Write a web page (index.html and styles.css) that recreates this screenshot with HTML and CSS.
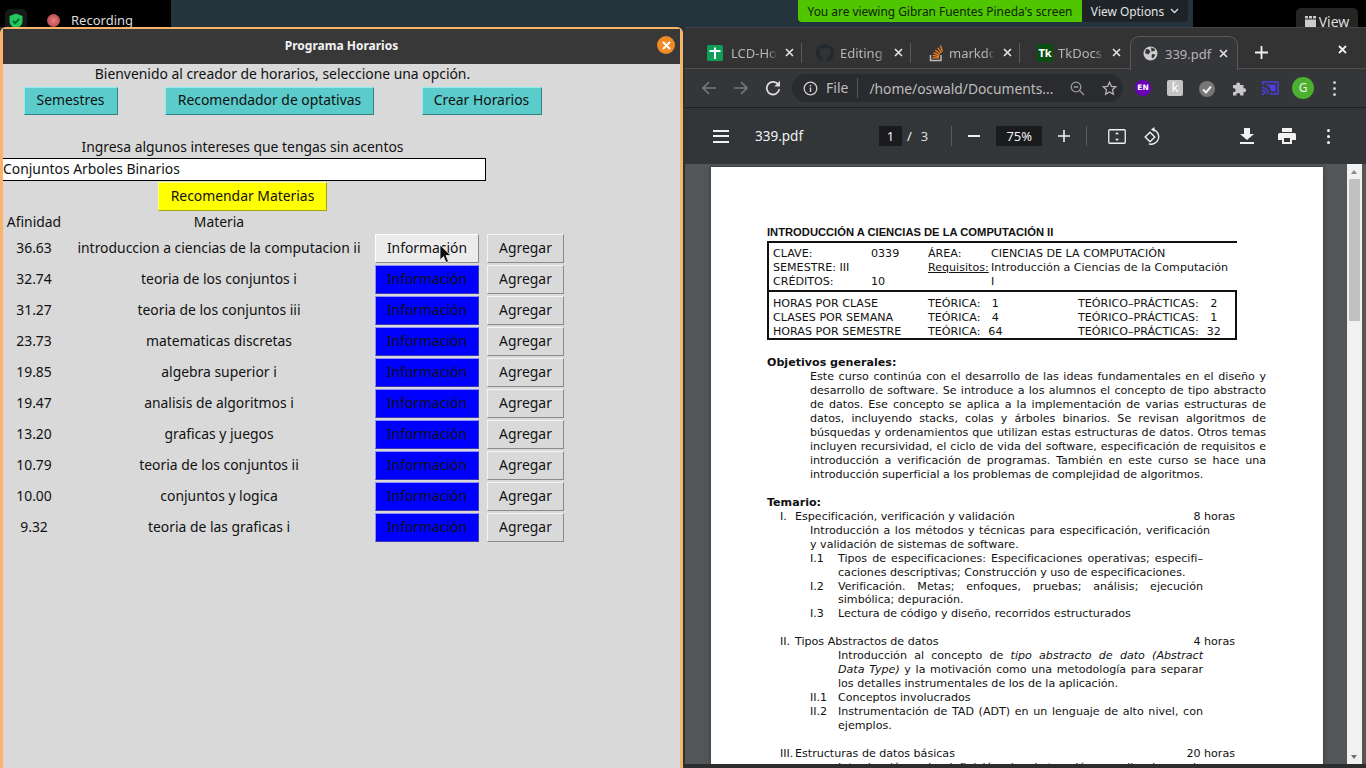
FILE: index.html
```html
<!DOCTYPE html>
<html lang="es">
<head>
<meta charset="utf-8">
<title>Programa Horarios</title>
<link rel="stylesheet" href="styles.css">
</head>
<body>
<div class="desktop">
  <div class="rec-strip">
    <span class="shield-bg"></span>
    <svg class="shield" width="14" height="16" viewBox="0 0 14 16"><path d="M7 0.5 13.500 3v5c0 3.600-2.800 6.400-6.500 7.500C3.300 14.400.5 11.600.5 8V3z" fill="#22c55e"/><path d="M4 8l2.200 2.200L10.200 5.800" fill="none" stroke="#063" stroke-width="1.800"/></svg>
    <span class="rec-dot"></span>
    <span class="rec-label">Recording</span>
  </div>
  <div class="share-bar">
    <span class="share-msg">You are viewing Gibran Fuentes Pineda's screen</span>
    <span class="share-opt">View Options <svg width="9" height="6" viewBox="0 0 9 6"><path d="M1 1l3.500 3.500L8 1" fill="none" stroke="#ddd" stroke-width="1.300"/></svg></span>
  </div>
  <div class="right-black"></div>
  <div class="view-btn">
    <svg width="11" height="11" viewBox="0 0 11 11"><path d="M0 0h3v2.500H0zM4 0h3v2.500H4zM8 0h3v2.500H8z" fill="#ccc"/><path d="M0 3.500h11V11H0z" fill="#ccc"/></svg>
    <span>View</span>
  </div>

  <section class="tk-window">
    <header class="tk-title">
      <span>Programa Horarios</span>
      <span class="tk-close"><svg width="9" height="9" viewBox="0 0 9 9"><path d="M1.500 1.500l6 6M7.500 1.500l-6 6" stroke="#fff" stroke-width="2" stroke-linecap="round"/></svg></span>
    </header>
    <div class="tk-body">
      <p class="welcome">Bienvenido al creador de horarios, seleccione una opción.</p>
      <div class="menu-row">
        <button class="tk-btn teal w-sem">Semestres</button>
        <button class="tk-btn teal w-rec">Recomendador de optativas</button>
        <button class="tk-btn teal w-cre">Crear Horarios</button>
      </div>
      <div class="search">
        <p class="prompt">Ingresa algunos intereses que tengas sin acentos</p>
        <div class="entry">Conjuntos Arboles Binarios</div>
        <button class="tk-btn yellow">Recomendar Materias</button>
      </div>
      <div class="results">
        <span class="head">Afinidad</span><span class="head">Materia</span><span></span><span></span>
        <span>36.63</span><span>introduccion a ciencias de la computacion ii</span><button class="tk-btn gray hover">Información</button><button class="tk-btn gray">Agregar</button>
        <span>32.74</span><span>teoria de los conjuntos i</span><button class="tk-btn blue">Información</button><button class="tk-btn gray">Agregar</button>
        <span>31.27</span><span>teoria de los conjuntos iii</span><button class="tk-btn blue">Información</button><button class="tk-btn gray">Agregar</button>
        <span>23.73</span><span>matematicas discretas</span><button class="tk-btn blue">Información</button><button class="tk-btn gray">Agregar</button>
        <span>19.85</span><span>algebra superior i</span><button class="tk-btn blue">Información</button><button class="tk-btn gray">Agregar</button>
        <span>19.47</span><span>analisis de algoritmos i</span><button class="tk-btn blue">Información</button><button class="tk-btn gray">Agregar</button>
        <span>13.20</span><span>graficas y juegos</span><button class="tk-btn blue">Información</button><button class="tk-btn gray">Agregar</button>
        <span>10.79</span><span>teoria de los conjuntos ii</span><button class="tk-btn blue">Información</button><button class="tk-btn gray">Agregar</button>
        <span>10.00</span><span>conjuntos y logica</span><button class="tk-btn blue">Información</button><button class="tk-btn gray">Agregar</button>
        <span>9.32</span><span>teoria de las graficas i</span><button class="tk-btn blue">Información</button><button class="tk-btn gray">Agregar</button>
      </div>
    </div>
  </section>
  <svg class="cursor" width="14" height="20" viewBox="0 0 14 20"><path d="M1 1v15l3.500-3.500 2.500 6 2.500-1-2.500-6h5z" fill="#111" stroke="#eee" stroke-width=".8"/></svg>

  <section class="chrome">
    <div class="tabstrip">
      <div class="tab">
        <svg class="fav" width="16" height="16" viewBox="0 0 16 16"><rect width="16" height="16" rx="1.500" fill="#0f9d58"/><path d="M2.500 6h11M8 2.500V14" stroke="#fff" stroke-width="2"/></svg>
        <span class="tab-name">LCD-Hor</span><span class="tab-x"><svg width="9" height="9" viewBox="0 0 9 9"><path d="M1 1l7 7M8 1l-7 7" stroke="#e4e4e4" stroke-width="1.600"/></svg></span>
      </div>
      <div class="tab">
        <svg class="fav" width="18" height="18" viewBox="0 0 16 16"><path fill="#24292e" d="M8 0C3.580 0 0 3.580 0 8c0 3.540 2.290 6.530 5.470 7.590.4.070.55-.17.55-.38 0-.19-.01-.82-.01-1.490-2.010.37-2.530-.49-2.690-.94-.09-.23-.48-.94-.82-1.130-.28-.15-.68-.52-.01-.53.63-.01 1.080.58 1.230.82.720 1.210 1.870.87 2.330.66.070-.52.280-.87.510-1.070-1.780-.2-3.640-.89-3.640-3.950 0-.87.310-1.590.820-2.150-.08-.2-.36-1.020.08-2.120 0 0 .67-.21 2.200.82.640-.18 1.320-.27 2-.27s1.360.09 2 .27c1.530-1.040 2.200-.82 2.200-.82.440 1.100.160 1.920.080 2.120.510.560.820 1.270.820 2.150 0 3.070-1.870 3.750-3.650 3.950.290.250.540.730.540 1.480 0 1.070-.01 1.930-.01 2.200 0 .210.150.460.550.380A8.010 8.010 0 0 0 16 8c0-4.420-3.580-8-8-8z"/></svg>
        <span class="tab-name">Editing</span><span class="tab-x"><svg width="9" height="9" viewBox="0 0 9 9"><path d="M1 1l7 7M8 1l-7 7" stroke="#e4e4e4" stroke-width="1.600"/></svg></span>
      </div>
      <div class="tab">
        <svg class="fav so" width="15" height="18" viewBox="0 0 15 18"><path d="M1.500 11v5.500h10.500V11" fill="none" stroke="#bcbbbb" stroke-width="1.500"/><path d="M3.500 13.800h6.500M3.700 11.300l6.300 1.300M4.500 8.700l5.800 2.700M6.200 6.100l5 4M8.800 3.600l3.600 5.300M11.500 1.500l2 6" fill="none" stroke="#f48024" stroke-width="1.300"/></svg>
        <span class="tab-name">markdo</span><span class="tab-x"><svg width="9" height="9" viewBox="0 0 9 9"><path d="M1 1l7 7M8 1l-7 7" stroke="#e4e4e4" stroke-width="1.600"/></svg></span>
      </div>
      <div class="tab">
        <span class="tk-fav">Tk</span>
        <span class="tab-name">TkDocs</span><span class="tab-x"><svg width="9" height="9" viewBox="0 0 9 9"><path d="M1 1l7 7M8 1l-7 7" stroke="#e4e4e4" stroke-width="1.600"/></svg></span>
      </div>
      <div class="tab active">
        <svg class="fav" width="15" height="15" viewBox="0 0 15 15"><circle cx="7.500" cy="7.500" r="7" fill="#ccc"/><path d="M3 3l3 .500 1.500 2.500-2.500 2.500-3-1.500zM8 1.500l4 1.500-.500 2-3 .500zM9 8l3.500.500-2.500 4-1.500-1.500z" fill="#35363a"/></svg>
        <span class="tab-name plain">339.pdf</span><span class="tab-x"><svg width="9" height="9" viewBox="0 0 9 9"><path d="M1 1l7 7M8 1l-7 7" stroke="#e4e4e4" stroke-width="1.600"/></svg></span>
      </div>
      <svg class="new-tab" width="13" height="13" viewBox="0 0 13 13"><path d="M6.500 0v13M0 6.500h13" stroke="#f1f1f1" stroke-width="1.800"/></svg>
      <svg class="win-close" width="9" height="9" viewBox="0 0 9 9"><path d="M1 1l7 7M8 1l-7 7" stroke="#f1f1f1" stroke-width="1.800"/></svg>
    </div>
    <div class="omnibar">
      <svg class="nav" width="16" height="16" viewBox="0 0 16 16"><path d="M15 8H2M8 2 2 8l6 6" fill="none" stroke="#77787a" stroke-width="1.700"/></svg>
      <svg class="nav" width="16" height="16" viewBox="0 0 16 16"><path d="M1 8h13M8 2l6 6-6 6" fill="none" stroke="#77787a" stroke-width="1.700"/></svg>
      <svg class="nav" width="16" height="16" viewBox="0 0 16 16"><path d="M13.500 5A6.300 6.300 0 1 0 14.300 9" fill="none" stroke="#dcdcdc" stroke-width="1.800"/><path d="M15 .800V6.500H9.300z" fill="#dcdcdc"/></svg>
      <div class="pill">
        <svg width="15" height="15" viewBox="0 0 15 15"><circle cx="7.500" cy="7.500" r="6.300" fill="none" stroke="#d0d0d0" stroke-width="1.300"/><path d="M7.500 6.500v4.500M7.500 4v1.500" stroke="#d0d0d0" stroke-width="1.400"/></svg>
        <span class="scheme">File</span>
        <span class="url">/home/oswald/Documents...</span>
        <svg class="zoom-i" width="15" height="15" viewBox="0 0 15 15"><circle cx="6" cy="6" r="4.800" fill="none" stroke="#9a9a9a" stroke-width="1.300"/><path d="M3.800 6h4.400M9.500 9.500l4.500 4.500" stroke="#9a9a9a" stroke-width="1.300"/></svg>
        <svg width="15" height="15" viewBox="0 0 15 15"><path d="M7.500 1.300l1.900 4 4.400.500-3.300 3 .9 4.400-3.900-2.200-3.900 2.200.9-4.400-3.300-3 4.400-.500z" fill="none" stroke="#b5b5b5" stroke-width="1.300"/></svg>
      </div>
      <div class="exts">
        <span class="ext-en">EN</span>
        <span class="ext-k">ƙ</span>
        <span class="ext-check"><svg width="16" height="16" viewBox="0 0 16 16"><circle cx="8" cy="8" r="8" fill="#777"/><path d="M4 8.500l3 3 5-6" fill="none" stroke="#eee" stroke-width="2"/></svg></span>
        <svg width="15" height="15" viewBox="0 0 15 15"><path d="M1 4h3.300a2 2 0 1 1 3.800 0H11.500v3.300a2 2 0 1 1 0 3.800V14.500H8.200a2 2 0 1 0-3.800 0H1v-3.400a2 2 0 1 0 0-3.800z" fill="#c8c8c8"/></svg>
        <svg width="17" height="14" viewBox="0 0 17 14"><path d="M1 4V1h15v12H8" fill="none" stroke="#4a3fe0" stroke-width="1.500"/><path d="M0 6.500c3.500 0 6.500 3 6.500 6.500M0 9.500c2 0 3.500 1.500 3.500 3.500" fill="none" stroke="#4a3fe0" stroke-width="1.400"/><path d="M3 3.500h10.500v7H9C8.500 7 7 4.500 3 4z" fill="#4a3fe0"/><circle cx="1" cy="13" r="1.200" fill="#4a3fe0"/></svg>
        <span class="avatar">G</span>
        <span class="dots"><i></i><i></i><i></i></span>
      </div>
    </div>
    <div class="pdf-bar">
      <span class="burger"><i></i><i></i><i></i></span>
      <span class="pdf-name">339.pdf</span>
      <span class="page-box">1</span><span class="slash">/</span><span class="pages">3</span>
      <span class="vsep sep-a"></span>
      <span class="minus"></span>
      <span class="zoom-box">75%</span>
      <svg class="plus" width="12" height="12" viewBox="0 0 12 12"><path d="M6 0v12M0 6h12" stroke="#f1f1f1" stroke-width="1.600"/></svg>
      <span class="vsep sep-b"></span>
      <svg class="fit" width="18" height="15" viewBox="0 0 18 15"><rect x=".75" y=".75" width="16.500" height="13.500" rx="1" fill="none" stroke="#f1f1f1" stroke-width="1.300"/><path d="M9 3l2 2.300H7zM9 12l2-2.300H7z" fill="#f1f1f1"/></svg>
      <svg class="rotate" width="18" height="18" viewBox="0 0 18 18"><path d="M6 5.200 10.800 10 6 14.800 1.200 10z" fill="none" stroke="#f1f1f1" stroke-width="1.400"/><path d="M9.500 2.600A7.500 7.500 0 1 1 4.800 16.900" fill="none" stroke="#f1f1f1" stroke-width="1.400"/><path d="M10.500 0v5L7 2.500z" fill="#f1f1f1"/></svg>
      <span class="bar-spacer"></span>
      <svg class="act" width="14" height="16" viewBox="0 0 14 16"><path d="M4 0h6v6h4L7 12 0 6h4zM0 14h14v2H0z" fill="#f1f1f1"/></svg>
      <svg class="act" width="18" height="16" viewBox="0 0 18 16"><path d="M4 0h10v4H4zM1.500 5h15A1.500 1.500 0 0 1 18 6.500V12h-4v4H4v-4H0V6.500A1.500 1.500 0 0 1 1.500 5zM6 10v4h6v-4z" fill="#f1f1f1"/></svg>
      <span class="dots bright"><i></i><i></i><i></i></span>
    </div>
    <div class="viewer">
      <article class="pdf-page">
        <h2 class="pdf-h1">INTRODUCCIÓN A CIENCIAS DE LA COMPUTACIÓN II</h2>
        <div class="box box-a">
          <span>CLAVE:</span><span>0339</span><span>ÁREA:</span><span>CIENCIAS DE LA COMPUTACIÓN</span>
          <span>SEMESTRE: III</span><span></span><span class="req">Requisitos:</span><span>Introducción a Ciencias de la Computación</span>
          <span>CRÉDITOS:</span><span>10</span><span></span><span>I</span>
        </div>
        <div class="box box-b">
          <span>HORAS POR CLASE</span><span class="t"><b>TEÓRICA:</b><em>1</em></span><span class="t"><b>TEÓRICO–PRÁCTICAS:</b><em>2</em></span>
          <span>CLASES POR SEMANA</span><span class="t"><b>TEÓRICA:</b><em>4</em></span><span class="t"><b>TEÓRICO–PRÁCTICAS:</b><em>1</em></span>
          <span>HORAS POR SEMESTRE</span><span class="t"><b>TEÓRICA:</b><em>64</em></span><span class="t"><b>TEÓRICO–PRÁCTICAS:</b><em>32</em></span>
        </div>
        <h3 class="pdf-h2 obj">Objetivos generales:</h3>
        <div class="para">
          <p class="j">Este curso continúa con el desarrollo de las ideas fundamentales en el diseño y</p>
          <p class="j">desarrollo de software. Se introduce a los alumnos el concepto de tipo abstracto</p>
          <p class="j">de datos. Ese concepto se aplica a la implementación de varias estructuras de</p>
          <p class="j">datos, incluyendo stacks, colas y árboles binarios. Se revisan algoritmos de</p>
          <p class="j">búsquedas y ordenamientos que utilizan estas estructuras de datos. Otros temas</p>
          <p class="j">incluyen recursividad, el ciclo de vida del software, especificación de requisitos e</p>
          <p class="j">introducción a verificación de programas. También en este curso se hace una</p>
          <p>introducción superficial a los problemas de complejidad de algoritmos.</p>
        </div>
        <h3 class="pdf-h2 tem">Temario:</h3>
        <div class="unit"><span class="u-num">I.</span><span class="u-name">Especificación, verificación y validación</span><span class="u-hrs">8 horas</span></div>
        <p class="l1 j">Introducción a los métodos y técnicas para especificación, verificación</p>
        <p class="l1">y validación de sistemas de software.</p>
        <div class="item"><span class="i-n">I.1</span><div class="i-t"><p class="j">Tipos de especificaciones: Especificaciones operativas; especifi–</p><p>caciones descriptivas; Construcción y uso de especificaciones.</p></div></div>
        <div class="item"><span class="i-n">I.2</span><div class="i-t"><p class="j">Verificación. Metas; enfoques, pruebas; análisis; ejecución</p><p class="tight">simbólica; depuración.</p></div></div>
        <div class="item"><span class="i-n">I.3</span><div class="i-t"><p>Lectura de código y diseño, recorridos estructurados</p></div></div>
        <div class="unit gap"><span class="u-num">II.</span><span class="u-name">Tipos Abstractos de datos</span><span class="u-hrs">4 horas</span></div>
        <div class="item"><span class="i-n"></span><div class="i-t"><p class="j">Introducción al concepto de <i>tipo abstracto de dato (Abstract</i></p><p class="j"><i>Data Type)</i> y la motivación como una metodología para separar</p><p>los detalles instrumentales de los de la aplicación.</p></div></div>
        <div class="item"><span class="i-n">II.1</span><div class="i-t"><p>Conceptos involucrados</p></div></div>
        <div class="item"><span class="i-n">II.2</span><div class="i-t"><p class="j">Instrumentación de TAD (ADT) en un lenguaje de alto nivel, con</p><p>ejemplos.</p></div></div>
        <div class="unit gap"><span class="u-num">III.</span><span class="u-name">Estructuras de datos básicas</span><span class="u-hrs">20 horas</span></div>
        <div class="item"><span class="i-n"></span><div class="i-t"><p class="j">Introducción a la definición de abstracción y aplicaciones de</p></div></div>
      </article>
      <div class="scrollbar"><span class="arrow-up"></span><span class="thumb"></span><span class="arrow-down"></span></div>
    </div>
    <div class="chrome-foot"></div>
  </section>
</div>
</body>
</html>
```
FILE: styles.css
```css
* { box-sizing: border-box; }
html, body { margin: 0; padding: 0; }
body { width: 1366px; height: 768px; overflow: hidden; font-family: "Noto Sans", sans-serif; }
p, h2, h3 { margin: 0; font-size: inherit; font-weight: normal; }
.desktop { position: relative; width: 1366px; height: 768px; overflow: hidden; background: #24333c; }

/* Zoom overlays */
.rec-strip { position: absolute; left: 0; top: 0; width: 171px; height: 27px; background: #000; color: #ddd; font-size: 13px; }
.shield-bg { position: absolute; left: 5px; top: 9px; width: 22px; height: 18px; border-radius: 5px 5px 0 0; background: #151a17; }
.shield { position: absolute; left: 9px; top: 13px; }
.rec-dot { position: absolute; left: 47px; top: 14px; width: 13px; height: 13px; border-radius: 50%; background: radial-gradient(#e87f7f, #a83a3a); }
.rec-label { position: absolute; left: 71px; top: 12px; line-height: 17px; }
.share-bar { position: absolute; left: 798px; top: 0; height: 22px; display: flex; font-size: 11.900px; line-height: 22px; border-radius: 0 0 4px 4px; overflow: hidden; }
.share-msg { width: 284px; background: #4fc600; color: #10240a; text-align: center; }
.share-opt { width: 106px; background: #1d2327; color: #e4e4e4; display: flex; align-items: center; justify-content: center; gap: 6px; }
.right-black { position: absolute; left: 1193px; top: 0; width: 173px; height: 27px; background: #000; }
.view-btn { position: absolute; left: 1296px; top: 8px; width: 62px; height: 26px; border-radius: 5px 5px 0 0; background: #252525; color: #ddd; font-size: 14px; display: flex; align-items: center; justify-content: center; gap: 3px; }

/* Tk window */
.tk-window { position: absolute; left: 0; top: 27px; width: 683px; height: 741px; border: 3px solid #fbb36a; border-bottom: 0; border-top-width: 2px; border-radius: 6px 6px 0 0; background: #d9d9d9; color: #111; font-size: 13.900px; }
.tk-title { height: 35px; padding-bottom: 3px; background: #383838; color: #f2f2f2; font-size: 12px; font-weight: 700; display: flex; align-items: center; justify-content: center; position: relative; }
.tk-close { position: absolute; right: 5px; top: 7px; width: 18px; height: 18px; border-radius: 50%; background: #f08a24; display: flex; align-items: center; justify-content: center; }
.tk-body { display: flex; flex-direction: column; }
.welcome { width: 559px; height: 23px; line-height: 20px; text-align: center; }
.menu-row { display: flex; padding-left: 20.500px; gap: 47.500px; height: 28px; }
.tk-btn { font: inherit; color: #111; padding: 0 0 2px; margin: 0; border-width: 1px; border-style: solid; line-height: 1; }
.teal { background: #5bcbcb; border-color: #8ceeee #2f8585 #2f8585 #8ceeee; }
.w-sem { width: 94px; } .w-rec { width: 209px; } .w-cre { width: 120px; }
.search { width: 483px; margin-top: 21px; display: flex; flex-direction: column; align-items: center; }
.prompt { height: 22px; line-height: 22px; padding-right: 4px; }
.entry { width: 483px; height: 23px; background: #fff; border: 1px solid #000; border-left: 0; line-height: 20px; }
.yellow { width: 169px; height: 29px; margin: 1px 4px 0 0; background: #ffff00; border-color: #ffff80 #a5a500 #a5a500 #ffff80; }
.results { display: grid; grid-template-columns: 62px 308px 106px 85px; grid-template-rows: 21px repeat(10, 29px); row-gap: 2px; align-items: center; text-align: center; }
.results > span { padding-bottom: 2px; }
.results .head { align-self: start; line-height: 22px; padding-bottom: 0; }
.results > .tk-btn { height: 29px; }
.results > .tk-btn:nth-child(4n+3) { margin-left: 2px; width: 104px; }
.results > .tk-btn:nth-child(4n) { margin-left: 8px; width: 77px; }
.gray { background: #d9d9d9; border-color: #f4f4f4 #8a8a8a #8a8a8a #f4f4f4; }
.hover { background: #ececec; border-color: #fff #8a8a8a #8a8a8a #fff; }
.blue { background: #0000ff; border-color: #8f8fff #3a3ab5 #3a3ab5 #8f8fff; }
.cursor { position: absolute; left: 439px; top: 244px; }

/* Chrome */
.chrome { position: absolute; left: 685px; top: 27px; width: 681px; height: 741px; background: #35363a; border-radius: 6px 0 0 0; display: flex; flex-direction: column; color: #ddd; }
.tabstrip { height: 42px; flex: none; background: #333; padding: 9px 0 0 8px; display: flex; position: relative; border-top: 1px solid #444; border-bottom: 1px solid #4e4e4e; }
.tab { width: 109px; height: 20px; margin-top: 6px; display: flex; align-items: center; padding-left: 14px; position: relative; border-right: 1px solid #5a5a5a; }
.tab:nth-child(4) { border-right: 0; }
.fav { flex: none; }
.so { margin-left: 4px; }
.tab-name { position: absolute; left: 38px; width: 46px; overflow: hidden; white-space: nowrap; font-size: 13px; color: #b5b5b5; -webkit-mask-image: linear-gradient(90deg, #000 80%, transparent); mask-image: linear-gradient(90deg, #000 80%, transparent); }
.tab-name.plain { width: 50px; -webkit-mask-image: none; mask-image: none; }
.tab-x { position: absolute; left: 92px; top: 5px; display: flex; }
.tk-fav { width: 16px; height: 18px; margin-left: 3px; background: #0a4d12; color: #fff; font: 700 11px/18px "Noto Sans", sans-serif; text-align: center; }
.tab.active { width: 108px; height: 34px; margin-top: -1px; margin-left: 1px; background: #35363a; border: 1px solid #5a5a5a; border-bottom: 0; border-radius: 9px 9px 0 0; padding-left: 12px; }
.tab.active .tab-name { left: 34px; }
.tab.active .tab-x { left: 88px; top: 12px; }
.new-tab { position: absolute; left: 570px; top: 18px; }
.win-close { position: absolute; left: 653px; top: 17px; }
.omnibar { height: 39px; flex: none; display: flex; align-items: center; background: #35363a; border-bottom: 1px solid #1f2023; padding-left: 16px; }
.nav { margin-right: 16px; }
.pill { width: 331px; height: 28px; margin-left: -5px; border-radius: 14px; background: #2a2b2e; display: flex; align-items: center; padding-left: 11px; font-size: 14px; color: #bdbdbd; position: relative; }
.scheme { margin-left: 8px; padding-right: 9px; border-right: 1px solid #555; line-height: 20px; }
.url { margin-left: 11px; width: 183px; white-space: nowrap; font-size: 13.800px; }
.zoom-i { margin-left: 18px; margin-right: 17px; }
.exts { display: flex; align-items: center; margin-left: 12px; }
.exts > * { flex: none; }
.ext-en { width: 16px; height: 16px; border-radius: 50%; background: #6a00b8; color: #fff; font: 700 7.500px/16px "DejaVu Sans", sans-serif; text-align: center; }
.ext-k { width: 16px; height: 16px; margin-left: 16px; border-radius: 2px; background: #c4c4c4; color: #fff; font-size: 13px; line-height: 15px; text-align: center; }
.ext-check { margin-left: 16px; height: 16px; }
.exts > svg:nth-of-type(1) { margin-left: 17px; }
.exts > svg:nth-of-type(2) { margin-left: 15px; }
.avatar { width: 22px; height: 22px; margin-left: 13px; border-radius: 50%; background: #4caf2e; color: #eee; font-size: 12px; line-height: 22px; text-align: center; }
.dots { display: flex; flex-direction: column; gap: 3px; margin-left: 19px; }
.dots i { width: 3px; height: 3px; border-radius: 50%; background: #c8c8c8; }
.pdf-bar { height: 56px; flex: none; background: #323639; display: flex; align-items: center; position: relative; color: #f1f1f1; font-size: 14px; }
.burger { margin-left: 28px; display: flex; flex-direction: column; gap: 3.500px; }
.burger i { width: 16px; height: 2px; background: #f1f1f1; }
.pdf-name { margin-left: 26px; width: 124px; font-size: 13.500px; }
.page-box { width: 23px; height: 20px; background: #191b1c; text-align: center; line-height: 20px; font-size: 13px; }
.slash { margin-left: 5px; font-size: 13px; }
.pages { margin-left: 9px; font-size: 13px; color: #ddd; }
.vsep { width: 1px; height: 20px; background: #585b5e; }
.sep-a { margin-left: 23px; }
.minus { width: 12px; height: 2px; background: #f1f1f1; margin-left: 16px; }
.zoom-box { width: 46px; height: 20px; margin-left: 16px; background: #191b1c; text-align: center; line-height: 20px; font-size: 13px; }
.plus { margin-left: 16px; }
.sep-b { margin-left: 16px; }
.fit { margin-left: 21px; }
.rotate { margin-left: 18px; }
.bar-spacer { flex: 1; }
.act { margin-right: 24px; }
.act + .act { margin-right: 31px; }
.dots.bright { margin: 0 36px 0 0; }
.dots.bright i { background: #f1f1f1; }
.viewer { flex: 1; min-height: 0; background: #525659; position: relative; overflow: hidden; }
.chrome-foot { height: 4px; flex: none; background: #2d2d2d; }
.pdf-page { position: absolute; left: 26px; top: 3px; width: 612px; height: 640px; background: #fff; color: #111; padding: 58px 57px 0 56px; font: 11.100px/14px "DejaVu Sans", sans-serif; box-shadow: 0 0 4px rgba(0,0,0,.4); }
.pdf-page p { white-space: nowrap; }
.pdf-page p.j { text-align: justify; text-align-last: justify; white-space: normal; }
.pdf-page p.tight { margin-top: -1px; }
.pdf-h1 { font: 700 11.200px/14px "Liberation Sans", sans-serif; color: #111; }
.box { width: 470px; display: grid; border: 2px solid #111; white-space: nowrap; }
.box-a { margin-top: 2px; height: 49px; padding: 4px 4px; border-right: 0; border-bottom: 0; grid-template-columns: 98px 57px 63px 1fr; grid-auto-rows: 14px; }
.box-b { height: 50px; padding: 5px 4px 3px; grid-template-columns: 155px 150px 1fr; grid-auto-rows: 14px; }
.t { display: flex; }
.t b { font-weight: normal; }
.t em { font-style: normal; margin-left: 4px; width: 22px; text-align: center; }
.req { text-decoration: underline; }
.pdf-h2 { font-weight: 700; }
.obj { margin-top: 16px; }
.para { margin-left: 43px; width: 456px; }
.tem { margin-top: 14px; }
.unit { display: flex; width: 455px; margin-left: 13px; }
.unit.gap { margin-top: 14px; }
.u-num { width: 15px; }
.u-name { flex: 1; white-space: nowrap; }
.l1 { margin-left: 43px; width: 400px; }
.item { display: flex; margin-left: 43px; width: 393px; }
.i-n { width: 28px; flex: none; }
.i-t { flex: 1; }
.scrollbar { position: absolute; right: 4px; top: 0; bottom: 0; width: 15px; background: #f1f1f1; }
.thumb { position: absolute; left: 2px; right: 2px; top: 15px; height: 142px; background: #c1c1c1; }
.arrow-up, .arrow-down { position: absolute; left: 4px; width: 0; height: 0; border-left: 3.500px solid transparent; border-right: 3.500px solid transparent; }
.arrow-up { top: 6px; border-bottom: 4px solid #8a8a8a; }
.arrow-down { bottom: 5px; border-top: 4px solid #6f6f6f; }
```
